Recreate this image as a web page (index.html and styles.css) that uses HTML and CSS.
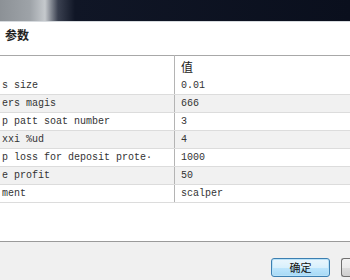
FILE: index.html
```html
<!DOCTYPE html>
<html lang="zh">
<head>
<meta charset="UTF-8" />
<meta name="viewport" content="width=device-width, initial-scale=1" />
<title>输入参数</title>
<link rel="stylesheet" href="styles.css">
</head>
<body>
<div class="dialog">
  <div class="titlebar"></div>

  <div class="panel">
    <div class="tab-label">参数</div>

    <table class="params">
      <thead>
        <tr><th class="name"></th><th class="value">值</th></tr>
      </thead>
      <tbody>
        <tr><td class="name">s size</td><td class="value">0.01</td></tr>
        <tr class="alt"><td class="name">ers magis</td><td class="value">666</td></tr>
        <tr><td class="name">p patt soat number</td><td class="value">3</td></tr>
        <tr class="alt"><td class="name">xxi %ud</td><td class="value">4</td></tr>
        <tr><td class="name">p loss for deposit prote&middot;</td><td class="value">1000</td></tr>
        <tr class="alt"><td class="name">e profit</td><td class="value">50</td></tr>
        <tr><td class="name">ment</td><td class="value">scalper</td></tr>
      </tbody>
    </table>
  </div>

  <div class="footer">
    <button type="button" class="btn btn-default">确定</button>
    <button type="button" class="btn btn-cut"></button>
  </div>
</div>
</body>
</html>
```

FILE: styles.css
```css
body {
  margin: 0; padding: 0;
  font-family: 'Liberation Mono', monospace;
  background: #f0f0f0;
  color: #333;
  overflow: hidden;
}
.dialog {
  width: 350px;
  height: 280px;
  display: flex;
  flex-direction: column;
}
.titlebar {
  height: 21px;
  border-bottom: 1px solid #d6dade;
  background: linear-gradient(to right, #8c9196 0, #9ea3a8 30px, #c5c9cd 45px, #3a4050 58px, #101626 75px, #0a0f1d 100%);
}
.panel {
  flex: 1;
  background: #fff;
  border-bottom: 1px solid #9a9a9a;
  overflow: hidden;
}
.tab-label {
  font-family: 'Noto Sans CJK SC', sans-serif;
  font-size: 12px;
  font-weight: bold;
  color: #222;
  padding: 4px 0 0 5px;
  height: 29px;
}
.params {
  border-collapse: collapse;
  width: 100%;
  font-size: 10px;
  border-top: 1px solid #a8a8a8;
}
.params th {
  height: 21px;
  text-align: left;
  font-family: 'Noto Sans CJK SC', sans-serif;
  font-size: 12px;
  font-weight: normal;
  color: #222;
  padding: 0 6px;
}
.params td {
  height: 17px;
  padding: 0 0 0 2px;
  border-bottom: 1px solid #dcdcdc;
  white-space: nowrap;
}
.params .name {
  width: 162px;
  border-right: 1px solid #b4b4b4;
}
.params td.value {
  padding-left: 6px;
}
.params .alt td {
  background: #f1f1f1;
}
.footer {
  height: 38px;
  display: flex;
  align-items: flex-start;
  justify-content: flex-end;
  gap: 11px;
  padding-top: 16px;
  box-sizing: border-box;
  overflow: hidden;
}
.btn {
  flex: none;
  width: 59px;
  height: 19px;
  border: 1px solid #707070;
  border-radius: 3px;
  background: linear-gradient(#f2f2f2, #ebebeb 50%, #dddddd 51%, #cfcfcf);
  font-family: 'Noto Sans CJK SC', sans-serif;
  font-size: 11px;
  color: #111;
  padding: 0;
  line-height: 15px;
}
.btn-default {
  border-color: #3c7fb1;
  background: linear-gradient(#eaf6fd, #d9f0fc 50%, #bee6fd 51%, #a7d9f5);
  box-shadow: inset 0 0 0 1px #b9e2f8;
}
.btn-cut {
  width: 9px;
  border-right: none;
  border-radius: 3px 0 0 3px;
}
```
